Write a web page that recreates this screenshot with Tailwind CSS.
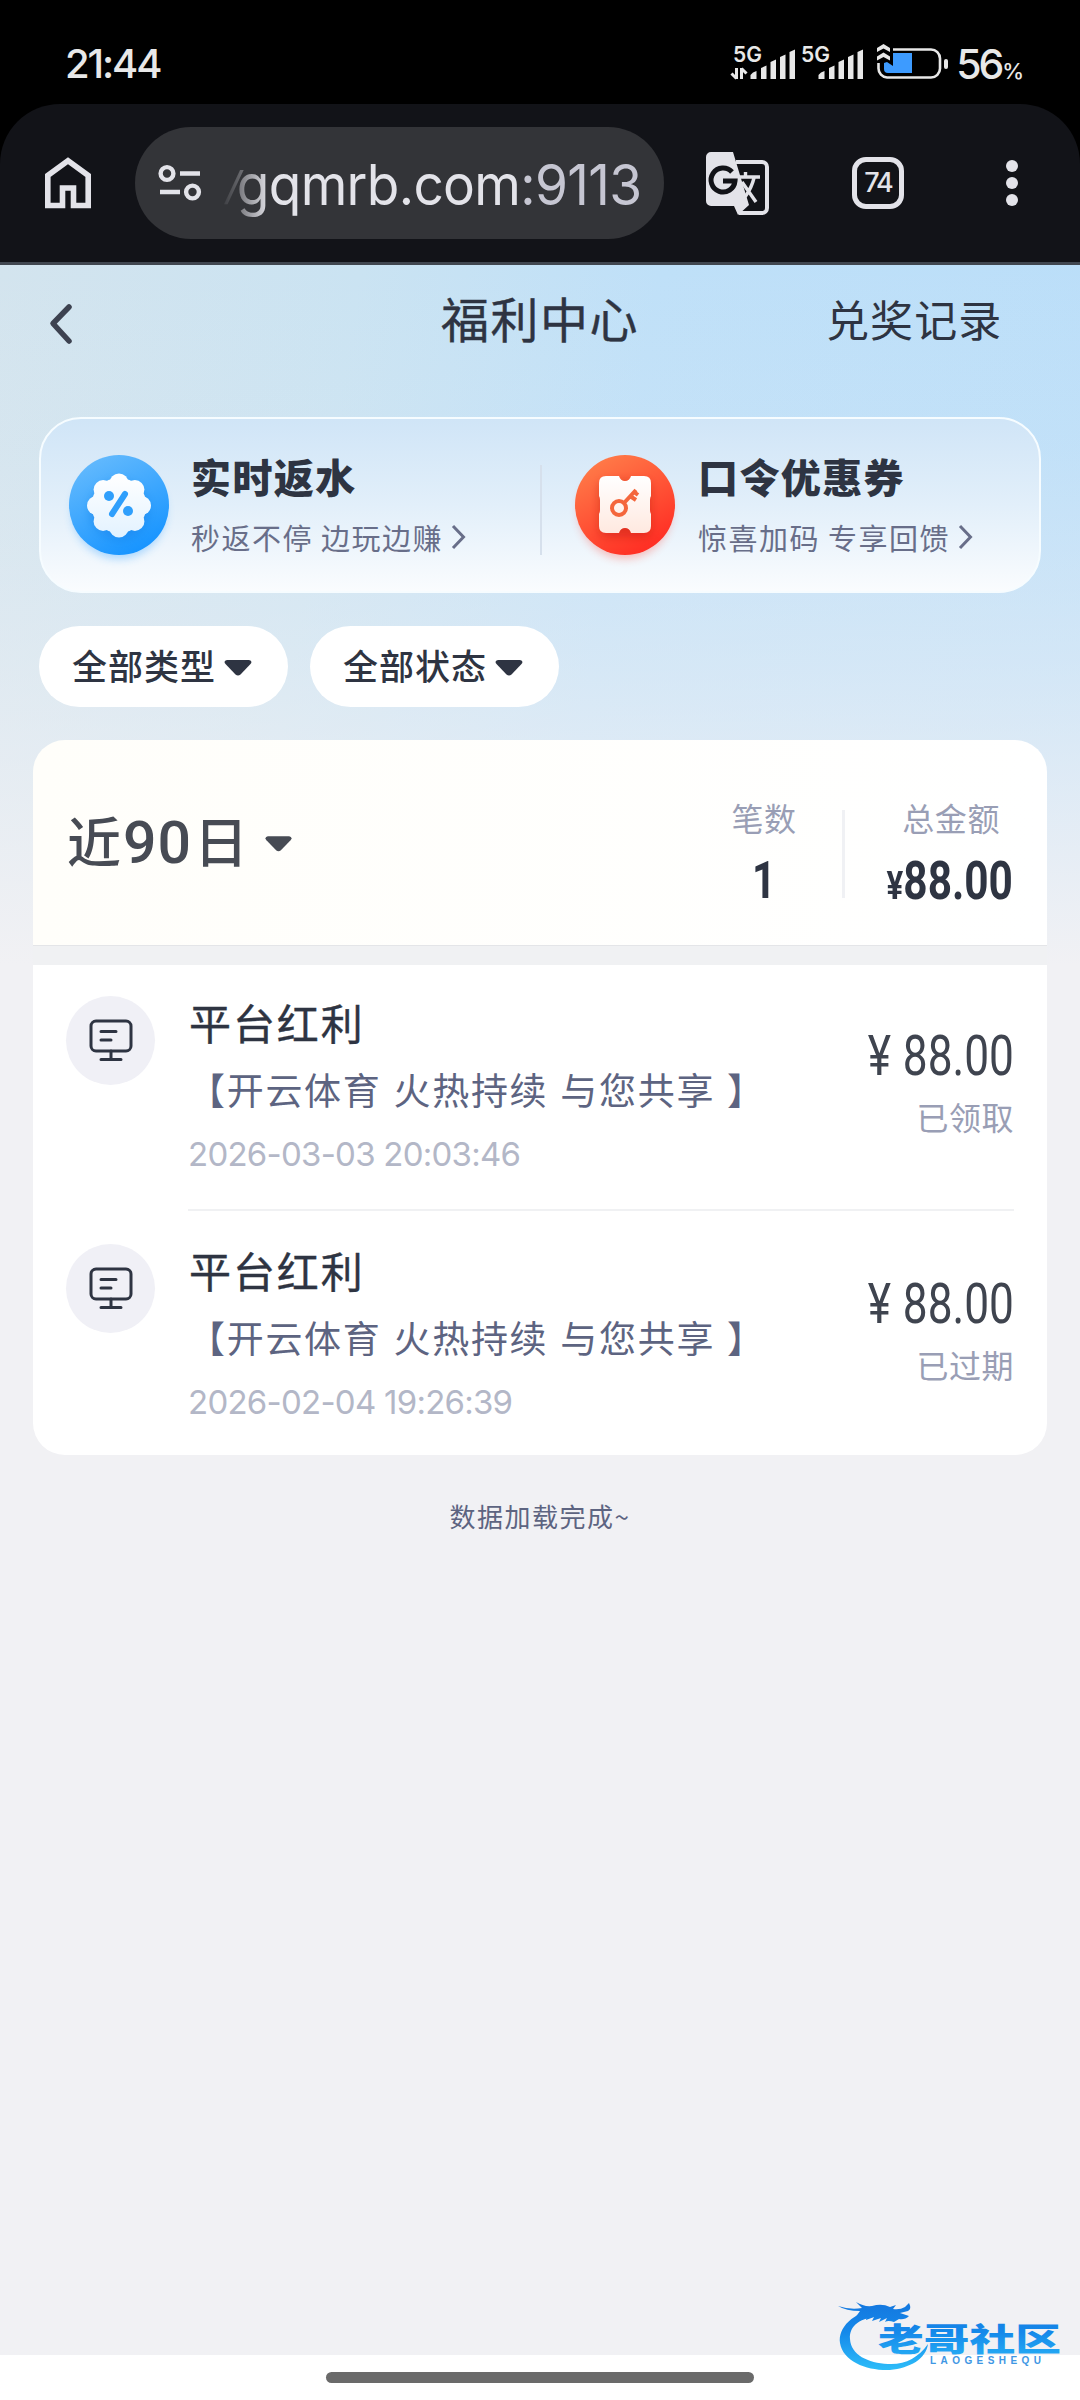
<!DOCTYPE html>
<html lang="zh-CN">
<head>
<meta charset="utf-8">
<title>福利中心</title>
<script src="https://cdn.jsdelivr.net/npm/@tailwindcss/browser@4"></script>
</head>
<body class="bg-black">
<div class="w-[1080px] h-[2400px] overflow-hidden flex flex-col font-['Noto_Sans_CJK_SC',sans-serif] text-[#2e3442] whitespace-nowrap">

  <!-- status bar -->
  <div class="h-[104px] shrink-0 bg-black text-[#e8e8e8] flex justify-between pl-[65px] pr-[57px] pt-[40px] font-['Inter',sans-serif]">
    <div class="text-[40px] leading-[48px] font-medium tracking-[-2.1px]">21:44</div>
    <div class="flex">
      <svg class="w-[220px] h-[44px]" viewBox="732 40 220 44" fill="#e8e8e8">
        <g font-family="Inter, sans-serif" font-size="22" font-weight="600">
          <text x="735" y="61.500" textLength="29" lengthAdjust="spacingAndGlyphs">5G</text>
          <text x="803" y="61.500" textLength="29" lengthAdjust="spacingAndGlyphs">5G</text>
        </g>
        <path d="M738.500 68v11M733.500 73.500l5 5M743.500 79v-11M743.500 68.500l5 5" stroke="#e8e8e8" stroke-width="3" fill="none"/>
        <path d="M752.500 75q2-3 6-4v8h-6zM763 68l5.500-2.500V79H763zM772.500 62l5.500-2.500V79h-5.500zM782 57l5.500-2.500V79H782zM791.500 52l5.500-2.500V79h-5.500z"/>
        <path d="M820.500 75q2-3 6-4v8h-6zM831 68l5.500-2.500V79H831zM840.500 62l5.500-2.500V79h-5.500zM850 57l5.500-2.500V79H850zM859.500 52l5.500-2.500V79h-5.500z"/>
        <path d="M895 49.500h38a9 9 0 0 1 9 9v10a9 9 0 0 1-9 9h-44a9 9 0 0 1-8.500-9v-5.500" fill="none" stroke="#e8e8e8" stroke-width="2.600"/>
        <path d="M886 63l3-1 6 4V53h19v20h-24q-4 0-4-4z" fill="#3d9bff"/>
        <path d="M879 52v-4l6.500-4 6.500 4v4l-6.500-3.500zM879 60.500v-4l6.500-4 6.500 4v4l-6.500-3.500z"/>
        <rect x="946" y="59" width="4" height="10" rx="2"/>
      </svg>
      <div class="pl-[6px] text-[41px] leading-[48px] font-medium tracking-[-3.200px]">56<span class="ml-[1px] text-[22px] tracking-[-1px]">%</span></div>
    </div>
  </div>

  <!-- browser toolbar -->
  <div class="h-[161px] shrink-0 rounded-t-[60px] bg-[#121318] border-b-[3px] border-[#414750] flex items-center">
    <svg class="ml-[45px] w-[46px] h-[52px]" viewBox="0 0 46 52" fill="none" stroke="#e3e3e9" stroke-width="5.600">
      <path d="M2.800 48.500V18.500L23 3.800l20.200 14.700v30H28.500V31h-11v17.500z"/>
    </svg>
    <div class="ml-[44px] w-[529px] h-[112px] rounded-full bg-[#333438] flex items-center">
      <svg class="ml-[23px] w-[44px] h-[40px]" viewBox="0 0 44 40" fill="none" stroke="#e3e3e9" stroke-width="4.400">
        <circle cx="9" cy="10.500" r="6.400"/><path d="M22 10.500h20M2 29h20"/><circle cx="34.500" cy="29" r="6.400"/>
      </svg>
      <div class="ml-[22px] mt-[3px] w-[440px] origin-left scale-x-[.95] font-['Inter',sans-serif] text-[56px] leading-[70px] text-[#e3e3e9] tracking-[-0.700px] [mask-image:linear-gradient(to_right,rgba(0,0,0,.1),#000_48px)]"><span class="inline-block italic -mr-[6px] origin-bottom scale-y-[.7] scale-x-[.8] -translate-y-[10px] opacity-70">/</span>gqmrb.com<span class="text-[#c6c6d2]">:9113</span></div>
    </div>
    <svg class="ml-[42px] w-[64px] h-[64px]" viewBox="0 0 64 64">
      <path d="M30 11h26a5 5 0 0 1 5 5v41a5 5 0 0 1-5 5H33" fill="none" stroke="#e3e3e9" stroke-width="4"/>
      <path d="M5 1h22l16 53-11 10-4-9H5a5 5 0 0 1-5-5V6a5 5 0 0 1 5-5z" fill="#e3e3e9"/>
      <path d="M31 56h8l-6 7z" fill="#e3e3e9"/>
      <path d="M26 21a12 12 0 1 0 3 9H17" fill="none" stroke="#121318" stroke-width="5"/>
      <path d="M33.500 26H54M39.500 21v5M48 27c-3 12-8 17-9 19M36 31l14 20" fill="none" stroke="#e3e3e9" stroke-width="3.400"/>
    </svg>
    <div class="ml-[82px] w-[52px] h-[52px] rounded-[14px] border-[5px] border-[#e3e3e9] flex items-center justify-center font-['Inter',sans-serif] text-[27px] font-medium text-[#e3e3e9] tracking-[-2px]">74</div>
    <div class="ml-[102px] flex flex-col gap-[5px]">
      <i class="w-3 h-3 rounded-full bg-[#e3e3e9]"></i><i class="w-3 h-3 rounded-full bg-[#e3e3e9]"></i><i class="w-3 h-3 rounded-full bg-[#e3e3e9]"></i>
    </div>
  </div>

  <!-- page -->
  <div class="h-[2090px] shrink-0 bg-[#f1f1f4] bg-[linear-gradient(to_bottom,rgba(241,241,244,0)_0,rgba(241,241,244,.12)_180px,rgba(241,241,244,.45)_400px,rgba(241,241,244,1)_700px),linear-gradient(100deg,#d3e4ee_0%,#cae3f2_30%,#bfe0f8_55%,#badef9_100%)] bg-no-repeat [background-size:1080px_700px] flex flex-col">
    <header class="h-[152px] shrink-0 flex items-start">
      <svg class="ml-[48px] mt-[37px] w-[26px] h-[44px]" viewBox="0 0 26 44" fill="none" stroke="#3d4250" stroke-width="5.500" stroke-linecap="round" stroke-linejoin="round"><path d="M21 5L5 21.500 21 39"/></svg>
      <h1 class="ml-[367px] mt-[16px] text-[48px] leading-[72px] tracking-[1.500px] [-webkit-text-stroke:.4px_#2e3442]">福利中心</h1>
      <div class="ml-[187px] mt-[17px] text-[43px] leading-[72px] tracking-[1.100px]">兑奖记录</div>
    </header>

    <section class="mx-[39px] h-[176px] shrink-0 rounded-[42px] border-2 border-[#f6fcff] bg-linear-to-b from-[#d0e5f7] via-[#e2effa] to-[#fafcfe] flex">
      <div class="w-[499px] flex pl-[27px] pt-[35px]">
        <svg class="w-[102px] h-[116px] overflow-visible" viewBox="0 0 102 116">
          <defs>
            <linearGradient id="blue" x1=".2" y1="0" x2=".7" y2="1"><stop offset="0" stop-color="#66bbfd"/><stop offset="1" stop-color="#1593ff"/></linearGradient>
            <linearGradient id="white" gradientUnits="userSpaceOnUse" x1="0" y1="20" x2="0" y2="84"><stop offset="0" stop-color="#fff"/><stop offset="1" stop-color="#e2f2ff"/></linearGradient>
            <filter id="soft" x="-30%" y="-30%" width="160%" height="160%"><feGaussianBlur stdDeviation="4"/></filter>
          </defs>
          <circle cx="51" cy="58" r="47" fill="#2a9bff" opacity=".35" filter="url(#soft)"/>
          <circle cx="51" cy="51" r="50" fill="url(#blue)"/>
          <circle cx="51" cy="56" r="30" fill="#0b72dd" opacity=".3" filter="url(#soft)"/>
          <g fill="url(#white)">
            <circle cx="51" cy="51.500" r="27.500"/>
            <circle cx="51" cy="29" r="9.500"/><circle cx="51" cy="74" r="9.500"/><circle cx="28.500" cy="51.500" r="9.500"/><circle cx="73.500" cy="51.500" r="9.500"/>
            <circle cx="35.100" cy="35.600" r="9.500"/><circle cx="66.900" cy="35.600" r="9.500"/><circle cx="35.100" cy="67.400" r="9.500"/><circle cx="66.900" cy="67.400" r="9.500"/>
          </g>
          <path d="M57 40L44 60" stroke="#2f9ffc" stroke-width="6" stroke-linecap="round"/>
          <circle cx="41" cy="42" r="5" fill="#2f9ffc"/><circle cx="60" cy="57" r="5" fill="#2f9ffc"/>
        </svg>
        <div class="ml-[21px]">
          <h2 class="text-[40px] leading-[44px] font-black tracking-[1.400px]">实时返水</h2>
          <p class="mt-[19px] flex items-center text-[29px] leading-[40px] tracking-[1.500px] text-[#686e89]">秒返不停 边玩边赚<svg class="ml-[8px] w-[16px] h-[26px]" viewBox="0 0 16 26" fill="none" stroke="#686e89" stroke-width="3"><path d="M2 2l10.500 11L2 24"/></svg></p>
        </div>
      </div>
      <div class="w-[2px] h-[90px] mt-[46px] bg-[#d6e0ec]"></div>
      <div class="flex pl-[32px] pt-[35px]">
        <svg class="w-[102px] h-[116px] overflow-visible" viewBox="0 0 102 116">
          <defs>
            <linearGradient id="red" x1=".2" y1="0" x2=".75" y2="1"><stop offset="0" stop-color="#ff7e4a"/><stop offset="1" stop-color="#ff2a22"/></linearGradient>
            <linearGradient id="cream" x1="0" y1="0" x2="0" y2="1"><stop offset="0" stop-color="#fff"/><stop offset="1" stop-color="#ffe9e0"/></linearGradient>
          </defs>
          <circle cx="51" cy="58" r="47" fill="#ff3b2a" opacity=".3" filter="url(#soft)"/>
          <circle cx="51" cy="51" r="50" fill="url(#red)"/>
          <rect x="25" y="27" width="52" height="56" rx="8" fill="#b81208" opacity=".4" filter="url(#soft)"/>
          <path d="M32 22h13q1.500 5 6 5t6-5h13q7 0 7 7v13q-1 1.500-1 4v10q0 2.500 1 4v12q0 7-7 7H57q-1.500-5-6-5t-6 5H32q-7 0-7-7V60q1-1.500 1-4V46q0-2.500-1-4V29q0-7 7-7z" fill="url(#cream)"/>
          <circle cx="45" cy="54" r="7" fill="none" stroke="#f4663c" stroke-width="4"/>
          <path d="M50 49l12-13M56 42l6 4M60 38l4 3" stroke="#f4663c" stroke-width="4" fill="none"/>
        </svg>
        <div class="ml-[22px]">
          <h2 class="text-[40px] leading-[44px] font-black tracking-[1.400px]">口令优惠券</h2>
          <p class="mt-[19px] flex items-center text-[29px] leading-[40px] tracking-[1.500px] text-[#686e89]">惊喜加码 专享回馈<svg class="ml-[8px] w-[16px] h-[26px]" viewBox="0 0 16 26" fill="none" stroke="#686e89" stroke-width="3"><path d="M2 2l10.500 11L2 24"/></svg></p>
        </div>
      </div>
    </section>

    <div class="mt-[33px] ml-[39px] flex gap-[22px] shrink-0 text-[35px] font-medium tracking-[1px]">
      <button class="w-[249px] h-[81px] rounded-full bg-white flex items-center pl-[33px] pb-[2px]">全部类型<svg class="ml-[8px] mt-[4px] w-[28px] h-[18px]" viewBox="0 0 28 18" fill="#2e3442"><path d="M3 1h22q4 1 1.500 4L16.500 15.500q-2.500 2-5 0L1.500 5Q-1 2 3 1z"/></svg></button>
      <button class="w-[249px] h-[81px] rounded-full bg-white flex items-center pl-[33px] pb-[2px]">全部状态<svg class="ml-[8px] mt-[4px] w-[28px] h-[18px]" viewBox="0 0 28 18" fill="#2e3442"><path d="M3 1h22q4 1 1.500 4L16.500 15.500q-2.500 2-5 0L1.500 5Q-1 2 3 1z"/></svg></button>
    </div>

    <section class="mt-[33px] mx-[33px] h-[206px] shrink-0 rounded-t-[32px] bg-linear-to-r from-[#fffefa] to-white flex border-b border-[#e4e5e8]">
      <div class="pl-[34px] pt-[60px] w-[620px] flex items-start text-[#474b54]">
        <div class="text-[54px] leading-[80px] font-medium">近<span class="font-['Roboto'] text-[59px] leading-none tracking-[1px] ml-[2px] mr-[2px]">90</span>日</div>
        <svg class="ml-[17px] mt-[35px] w-[27px] h-[18px]" viewBox="0 0 28 18" fill="#474b54"><path d="M3 1h22q4 1 1.500 4L16.500 15.500q-2.500 2-5 0L1.500 5Q-1 2 3 1z"/></svg>
      </div>
      <div class="w-[222px] pt-[54px] flex flex-col items-center">
        <div class="text-[32px] leading-[46px] tracking-[.6px] text-[#999eb5]">笔数</div>
        <div class="mt-[11px] font-['Roboto',sans-serif] text-[52px] leading-[60px] font-bold scale-x-[.8]">1</div>
      </div>
      <div class="-ml-[33px] mt-[70px] w-[3px] h-[88px] bg-[#f0f1f4]"></div>
      <div class="flex-1 pt-[54px] pr-[34px] flex flex-col items-end">
        <div class="pr-[13px] text-[32px] leading-[46px] tracking-[.6px] text-[#999eb5]">总金额</div>
        <div class="mt-[11px] font-['Roboto',sans-serif] text-[53px] leading-[60px] font-bold origin-right scale-x-[.8]"><span class="text-[39px]">¥</span>88.00</div>
      </div>
    </section>
    <div class="mx-[33px] h-[19px] shrink-0 bg-[#f0f1f3]"></div>

    <section class="mx-[33px] h-[490px] shrink-0 rounded-b-[32px] bg-white">
      <article class="h-[248px] flex pl-[33px] pt-[31px]">
        <div class="w-[89px] h-[89px] rounded-full bg-[#f0f0f6] flex items-center justify-center">
          <svg class="w-[44px] h-[44px]" viewBox="0 0 44 44" fill="none" stroke="#2e3442" stroke-width="3" stroke-linecap="round"><rect x="2" y="2" width="40" height="30" rx="5"/><path d="M12 12.500h15M12 21h10M22 32v8M12 40.500h20"/></svg>
        </div>
        <div class="ml-[33px] w-[826px] h-[215px] border-b-[2px] border-[#f0f1f3] flex justify-between">
          <div>
            <h3 class="ml-[1px] -mt-[4px] text-[42px] leading-[60px] tracking-[1.900px] [-webkit-text-stroke:.4px_#2e3442]">平台红利</h3>
            <p class="mt-[9px] text-[37px] leading-[56px] tracking-[1.700px] [word-spacing:2px] [text-spacing-trim:space-all] text-[#5d6481]">【开云体育 火热持续 与您共享 】</p>
            <time class="block mt-[15px] font-['Inter',sans-serif] text-[33px] leading-[44px] tracking-[-.75px] text-[#b3b7c7]">2026-03-03 20:03:46</time>
          </div>
          <div class="pt-[28px] flex flex-col items-end">
            <div class="font-['Roboto',sans-serif] text-[56px] leading-[64px] text-[#3f444f] origin-right scale-x-[.79] [word-spacing:1px]">¥ 88.00</div>
            <div class="mt-[5px] text-[32px] leading-[46px] tracking-[.5px] text-[#999eb5]">已领取</div>
          </div>
        </div>
      </article>
      <article class="h-[242px] flex pl-[33px] pt-[31px]">
        <div class="w-[89px] h-[89px] rounded-full bg-[#f0f0f6] flex items-center justify-center">
          <svg class="w-[44px] h-[44px]" viewBox="0 0 44 44" fill="none" stroke="#2e3442" stroke-width="3" stroke-linecap="round"><rect x="2" y="2" width="40" height="30" rx="5"/><path d="M12 12.500h15M12 21h10M22 32v8M12 40.500h20"/></svg>
        </div>
        <div class="ml-[33px] w-[826px] flex justify-between">
          <div>
            <h3 class="ml-[1px] -mt-[4px] text-[42px] leading-[60px] tracking-[1.900px] [-webkit-text-stroke:.4px_#2e3442]">平台红利</h3>
            <p class="mt-[9px] text-[37px] leading-[56px] tracking-[1.700px] [word-spacing:2px] [text-spacing-trim:space-all] text-[#5d6481]">【开云体育 火热持续 与您共享 】</p>
            <time class="block mt-[15px] font-['Inter',sans-serif] text-[33px] leading-[44px] tracking-[-.75px] text-[#b3b7c7]">2026-02-04 19:26:39</time>
          </div>
          <div class="pt-[28px] flex flex-col items-end">
            <div class="font-['Roboto',sans-serif] text-[56px] leading-[64px] text-[#3f444f] origin-right scale-x-[.79] [word-spacing:1px]">¥ 88.00</div>
            <div class="mt-[5px] text-[32px] leading-[46px] tracking-[.5px] text-[#999eb5]">已过期</div>
          </div>
        </div>
      </article>
    </section>

    <p class="mt-[41px] text-center text-[26px] leading-[40px] tracking-[1.500px] text-[#5d6481]">数据加载完成~</p>
  </div>

  <!-- gesture bar -->
  <div class="h-[45px] shrink-0 bg-white flex justify-center relative">
    <div class="mt-[17px] w-[428px] h-[11px] rounded-full bg-[#6a6a6a]"></div>
    <svg class="absolute left-[830px] -top-[65px] w-[240px] h-[90px]" viewBox="830 2290 240 90">
      <defs><linearGradient id="logo" gradientUnits="userSpaceOnUse" x1="0" y1="2300" x2="0" y2="2372"><stop offset="0" stop-color="#1476de"/><stop offset=".45" stop-color="#1589ea"/><stop offset="1" stop-color="#2fc0fa"/></linearGradient></defs>
      <path d="M880 2308C852 2312 838 2328 840 2343 843 2362 868 2371 890 2370 910 2368 926 2359 928 2344 918 2358 905 2365 888 2364 868 2363 851 2355 850 2339 849 2326 860 2317 882 2316z" fill="url(#logo)"/>
      <path d="M838 2306q12 4 24 2l-6-6q8 5 16 4 10-3 18 1l6-2-3 4q7 1 12-2l4-4q3 6-1 8l-8 2 9 3q-4 4-10 3l-5 3q-6-2-9 0l2-4-8 4 2-4-9 3 2-4-8 3 1-5q-8 1-12 3l5-7q-14 0-22-5z" fill="url(#logo)"/>
      <text x="878" y="2351" textLength="183" lengthAdjust="spacingAndGlyphs" font-family="Noto Sans CJK SC, sans-serif" font-weight="900" font-size="32" fill="url(#logo)">老哥社区</text>
      <text x="930" y="2364" textLength="111" font-family="Liberation Sans, sans-serif" font-weight="700" font-size="10" fill="#3f97e4">LAOGESHEQU</text>
    </svg>
  </div>
</div>
</body>
</html>
